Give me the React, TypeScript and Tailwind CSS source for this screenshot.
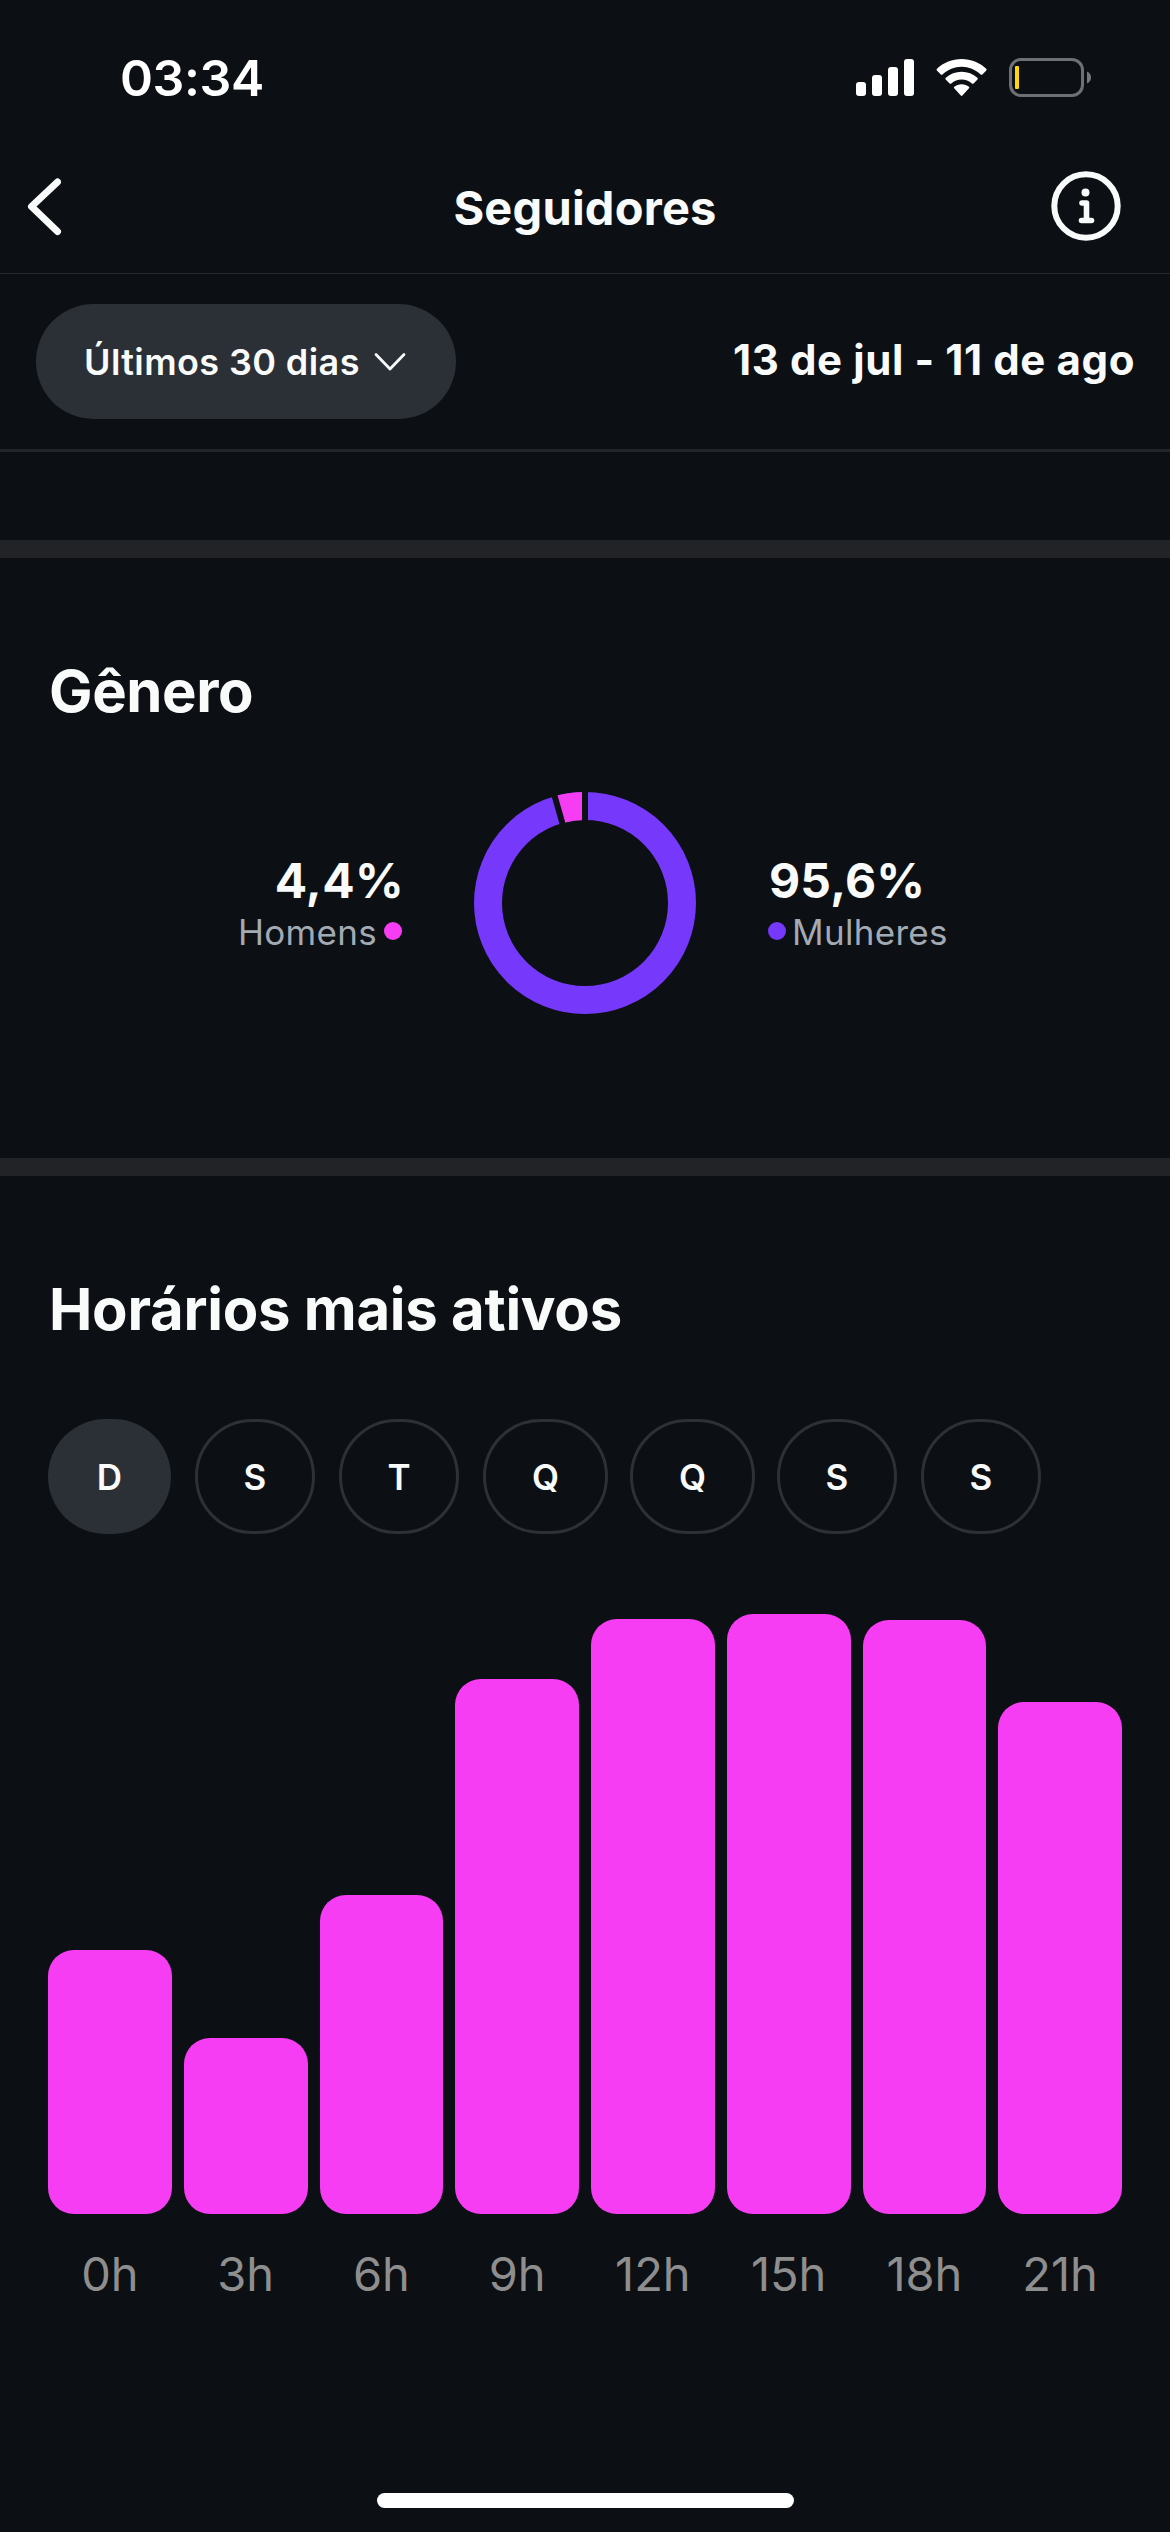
import { useState } from "react";

const days = [
  { label: "D", size: "w-[123px]" },
  { label: "S", size: "w-[120px]" },
  { label: "T", size: "w-[120px]" },
  { label: "Q", size: "w-[125px] -mr-0.5" },
  { label: "Q", size: "w-[125px] -mr-0.5" },
  { label: "S", size: "w-[120px]" },
  { label: "S", size: "w-[120px]" },
];

// bar heights in px
const hours = [
  { label: "0h", height: 264 },
  { label: "3h", height: 176 },
  { label: "6h", height: 319 },
  { label: "9h", height: 535 },
  { label: "12h", height: 595 },
  { label: "15h", height: 600 },
  { label: "18h", height: 594 },
  { label: "21h", height: 512 },
];

function StatusIcons() {
  return (
    <svg width="236" height="39" viewBox="0 0 236 39" fill="none">
      {/* Signal */}
      <g fill="#fff">
        <rect x="1" y="24" width="10" height="14" rx="3" />
        <rect x="17" y="17" width="10" height="21" rx="3" />
        <rect x="33" y="9" width="10" height="29" rx="3" />
        <rect x="49" y="1" width="10" height="37" rx="3" />
      </g>
      {/* Wifi */}
      <g fill="#fff">
        <path d="M106.600 1c-9.300 0-18 3.600-24.600 9.700-.5.500-.5 1.200-.1 1.700l3.900 4c.5.500 1.200.5 1.700.1 5.200-4.800 12-7.700 19.100-7.700s13.900 2.900 19.100 7.700c.5.400 1.200.4 1.700-.1l3.900-4c.4-.5.4-1.200-.1-1.700C124.600 4.600 115.900 1 106.600 1z" />
        <path d="M106.600 13.800c-6 0-11.500 2.300-15.800 6-.5.500-.5 1.200-.1 1.700l3.900 3.900c.5.500 1.200.5 1.700.1 2.800-2.400 6.400-3.900 10.300-3.900s7.500 1.500 10.300 3.900c.5.400 1.200.4 1.700-.1l3.900-3.900c.4-.5.4-1.200-.1-1.700-4.300-3.700-9.800-6-15.800-6z" />
        <path d="M106.600 26.200c-2.800 0-5.300 1-7.300 2.500-.5.400-.5 1.200-.1 1.600l6.600 7.200c.5.500 1.100.5 1.600 0l6.600-7.200c.4-.4.400-1.200-.1-1.600-2-1.500-4.500-2.500-7.300-2.500z" />
      </g>
      {/* Battery */}
      <rect x="155.500" y="1.500" width="72" height="36" rx="10.500" stroke="#6f7073" strokeWidth="3" />
      <rect x="160" y="8" width="4" height="23" rx="1" fill="#ffd60a" />
      <path d="M232 13.500c2.500 1 4 3.300 4 6s-1.500 5-4 6z" fill="#77787b" />
    </svg>
  );
}

function GenderDonut() {
  return (
    <svg width="222" height="222" viewBox="0 0 222 222" fill="none">
      <circle cx="111" cy="111" r="97" stroke="#7638fa" strokeWidth="28" />
      {/* 4.4% slice: 15.84 degrees before the top */}
      <path d="M111 14A97 97 0 0 0 84.520 17.680" stroke="#f73df3" strokeWidth="28" />
      <path d="M111 111V-2M111 111L80.150 2.300" stroke="#0c0f13" strokeWidth="6" />
    </svg>
  );
}

export default function App() {
  const [selected, setSelected] = useState(0);

  return (
    <div className="flex h-[2532px] w-[1170px] flex-col overflow-hidden bg-[#0c0f13] font-[Inter,sans-serif] leading-none text-[#f9fafa]">
      {/* Status bar */}
      <div className="flex h-[155px] items-center justify-between pl-[120px] pr-[79px] text-white">
        <span className="text-[50px] font-semibold tracking-[-0.4px]">03:34</span>
        <StatusIcons />
      </div>

      {/* Header */}
      <header className="flex h-[119px] items-center justify-between border-b border-[#24282d] pb-3 pl-6 pr-12">
        <button type="button" aria-label="Voltar" className="w-[74px]">
          <svg width="44" height="60" viewBox="0 0 44 60" fill="none">
            <path
              d="M33.500 4L7.500 28.500L33.500 53.500"
              stroke="#f9fafa"
              strokeWidth="7"
              strokeLinecap="round"
              strokeLinejoin="round"
            />
          </svg>
        </button>
        <h1 className="pb-0.5 pl-[22px] text-[47px] font-bold tracking-[0.2px]">Seguidores</h1>
        <button type="button" aria-label="Informações" className="w-[72px]">
          <svg width="72" height="74" viewBox="0 0 72 74" fill="none">
            <circle cx="36" cy="35" r="31.700" stroke="#f9fafa" strokeWidth="6" />
            <circle cx="35.500" cy="21.500" r="4" fill="#f9fafa" />
            <path
              d="M32 32h4.500v17.500M31.500 49.500h10"
              stroke="#f9fafa"
              strokeWidth="5.600"
              strokeLinecap="round"
              strokeLinejoin="round"
            />
          </svg>
        </button>
      </header>

      {/* Date range */}
      <div className="flex h-[178px] items-center justify-between border-b-3 border-[#232529] pl-9 pr-[35px]">
        <button
          type="button"
          className="flex h-[115px] w-[420px] items-center gap-3.5 rounded-full bg-[#2b2f36] pl-12"
        >
          <span className="text-[36px] font-semibold tracking-[0.4px]">Últimos 30 dias</span>
          <svg width="32" height="20" viewBox="0 0 32 20" fill="none">
            <path
              d="M2 2.500L16 17L30 2.500"
              stroke="#f9fafa"
              strokeWidth="2.800"
              strokeLinecap="round"
              strokeLinejoin="round"
            />
          </svg>
        </button>
        <span className="pb-[3px] text-[42px] font-bold tracking-[0.6px]">
          13 de jul - 11 de ago
        </span>
      </div>

      <div className="mt-[88px] h-[18px] shrink-0 bg-[#222327]" />

      {/* Gender */}
      <section className="h-[600px] shrink-0 px-12 pt-[104px]">
        <h2 className="pl-px text-[58px] font-bold tracking-[-0.4px]">Gênero</h2>
        <div className="mt-[72px] flex items-center gap-[72px]">
          <div className="flex flex-1 flex-col items-end gap-2.5">
            <span className="-mr-0.5 text-[48px] font-bold tracking-[0.3px]">4,4%</span>
            <div className="flex items-center gap-[7px]">
              <span className="text-[35px] tracking-[0.3px] text-[#a2aab4]">Homens</span>
              <span className="-mt-0.5 size-[18px] rounded-full bg-[#f73df3]" />
            </div>
          </div>
          <GenderDonut />
          <div className="flex flex-1 flex-col items-start gap-2.5">
            <span className="pl-px text-[48px] font-bold tracking-[0.2px]">95,6%</span>
            <div className="flex items-center gap-1.5">
              <span className="-mt-0.5 size-[18px] rounded-full bg-[#7638fa]" />
              <span className="text-[35px] tracking-[0.3px] text-[#a2aab4]">Mulheres</span>
            </div>
          </div>
        </div>
      </section>

      <div className="h-[18px] shrink-0 bg-[#222327]" />

      {/* Most active times */}
      <section className="px-12 pt-[104px]">
        <h2 className="pl-px text-[58px] font-bold tracking-[-0.25px]">Horários mais ativos</h2>
        <div className="mt-[81px] flex gap-6">
          {days.map((day, i) => (
            <button
              key={i}
              type="button"
              onClick={() => setSelected(i)}
              className={`h-[115px] shrink-0 rounded-full pt-px text-[35px] font-semibold ${day.size} ${
                i === selected ? "bg-[#2b2f36]" : "border-3 border-[#2d3034]"
              }`}
            >
              {day.label}
            </button>
          ))}
        </div>

        <div className="flex h-[680px] items-end gap-3">
          {hours.map((hour) => (
            <div
              key={hour.label}
              className="flex-1 rounded-[26px] bg-[#f73df3]"
              style={{ height: hour.height }}
            />
          ))}
        </div>
        <div className="mt-9 flex gap-3">
          {hours.map((hour) => (
            <span key={hour.label} className="flex-1 text-center text-[47px] text-[#8e8e8e]">
              {hour.label}
            </span>
          ))}
        </div>
      </section>

      {/* Home indicator */}
      <div className="mx-auto mb-6 mt-auto h-[15px] w-[417px] rounded-full bg-white" />
    </div>
  );
}
